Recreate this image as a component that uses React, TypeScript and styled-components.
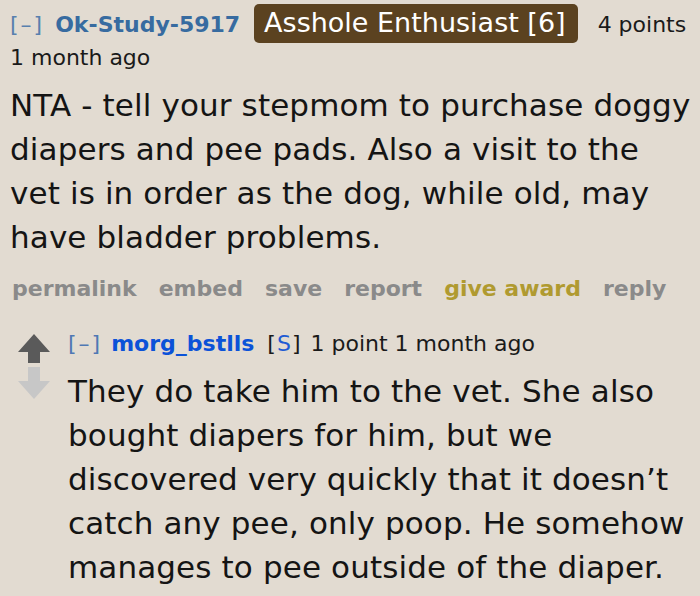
import React from 'react';
import styled, { createGlobalStyle } from 'styled-components';

const GlobalStyle = createGlobalStyle`
  html, body {
    margin: 0;
    padding: 0;
    background: #e2dbd1;
  }
  body {
    font-family: "DejaVu Sans", Verdana, sans-serif;
    color: #1a1a1a;
  }
`;

const Page = styled.div`
  padding: 0 0 0 10px;
  width: 700px;
  height: 596px;
  box-sizing: border-box;
  overflow: hidden;
`;

const Tagline = styled.div`
  display: flex;
  flex-wrap: wrap;
  align-items: baseline;
  padding-top: 4px;
  font-size: 22px;
  line-height: 30px;
`;

const Expand = styled.span<{ $child?: boolean }>`
  color: ${(p) => (p.$child ? '#4f78b4' : '#5880ae')};
  letter-spacing: 2px;
  margin-right: ${(p) => (p.$child ? '9px' : '11px')};
`;

const Author = styled.span<{ $submitter?: boolean }>`
  font-weight: bold;
  color: ${(p) => (p.$submitter ? '#0b52d8' : '#376ba0')};
  margin-right: ${(p) => (p.$submitter ? '13px' : '14px')};
`;

const Flair = styled.span`
  background: #5b4220;
  color: #fff;
  font-size: 27px;
  line-height: 31px;
  padding: 3px 12px 5px 10px;
  border-radius: 5px;
  margin-right: 20px;
`;

const Meta = styled.span`
  color: #1a1a1a;
`;

const TimeRow = styled.span`
  flex-basis: 100%;
  color: #1a1a1a;
`;

const Submitter = styled.span`
  color: #1a1a1a;
  letter-spacing: 1px;
  margin-right: 9px;

  b {
    font-weight: normal;
    color: #1f5bd4;
  }
`;

const Body = styled.div`
  margin-top: 10px;
  font-size: 31px;
  line-height: 44px;
  letter-spacing: 0.12px;
  color: #141414;
  white-space: nowrap;
`;

const Buttons = styled.ul`
  list-style: none;
  margin: 15px 0 0;
  padding: 0 0 0 2px;
  display: flex;
  gap: 22px;
  font-size: 22px;
  line-height: 30px;
  font-weight: bold;
`;

const Button = styled.li<{ $gold?: boolean }>`
  color: ${(p) => (p.$gold ? '#b09a30' : '#8a8a8a')};
`;

const Child = styled.div`
  display: flex;
  margin-top: 25px;
`;

const Votes = styled.div`
  display: flex;
  flex-direction: column;
  align-items: center;
  width: 33px;
  margin: 4px 18px 0 7px;
  gap: 4px;
`;

const ChildContent = styled.div`
  flex: 1;
  min-width: 0;

  ${Tagline} {
    padding-top: 0;
  }
`;

const UpArrow = () => (
  <svg width="32" height="30" viewBox="0 0 32 30">
    <polygon points="16,1 32,19 22,19 22,30 10,30 10,19 0,19" fill="#5a5a5a" />
  </svg>
);

const DownArrow = () => (
  <svg width="32" height="33" viewBox="0 0 32 33">
    <polygon points="10,0 22,0 22,14 32,14 16,32 0,14 10,14" fill="#c7c7c7" />
  </svg>
);

const buttons = ['permalink', 'embed', 'save', 'report', 'give award', 'reply'];

const parentLines = [
  'NTA - tell your stepmom to purchase doggy',
  'diapers and pee pads. Also a visit to the',
  'vet is in order as the dog, while old, may',
  'have bladder problems.',
];

const childLines = [
  'They do take him to the vet. She also',
  'bought diapers for him, but we',
  'discovered very quickly that it doesn’t',
  'catch any pee, only poop. He somehow',
  'manages to pee outside of the diaper.',
];

const Lines = ({ lines }: { lines: string[] }) => (
  <Body>
    {lines.map((l, i) => (
      <React.Fragment key={i}>
        {l}
        {i < lines.length - 1 && <br />}
      </React.Fragment>
    ))}
  </Body>
);

export default function App() {
  return (
    <Page>
      <GlobalStyle />
      <Tagline>
        <Expand>[–]</Expand>
        <Author>Ok-Study-5917</Author>
        <Flair>Asshole Enthusiast [6]</Flair>
        <Meta>4 points</Meta>
        <TimeRow>1 month ago</TimeRow>
      </Tagline>
      <Lines lines={parentLines} />
      <Buttons>
        {buttons.map((b) => (
          <Button key={b} $gold={b === 'give award'}>
            {b}
          </Button>
        ))}
      </Buttons>
      <Child>
        <Votes>
          <UpArrow />
          <DownArrow />
        </Votes>
        <ChildContent>
          <Tagline>
            <Expand $child>[–]</Expand>
            <Author $submitter>morg_bstlls</Author>
            <Submitter>
              [<b>S</b>]
            </Submitter>
            <Meta>1 point 1 month ago</Meta>
          </Tagline>
          <Lines lines={childLines} />
        </ChildContent>
      </Child>
    </Page>
  );
}
